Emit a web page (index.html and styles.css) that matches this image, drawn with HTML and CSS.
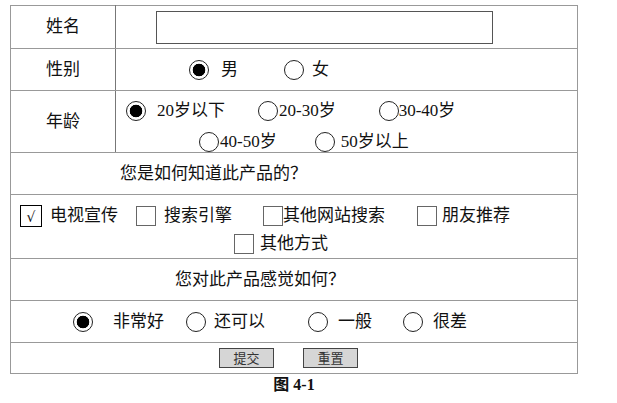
FILE: index.html
```html
<!DOCTYPE html>
<html lang="zh-CN">
<head>
    <meta charset="UTF-8">
    <title>产品调查表</title>
    <link rel="stylesheet" href="styles.css">
</head>
<body>
    <table class="survey">
        <tr class="row-name">
            <th>姓名</th>
            <td><input type="text" class="name-box"></td>
        </tr>
        <tr class="row-sex">
            <th>性别</th>
            <td>
                <div class="line sex-line">
                    <label class="opt gap12"><span class="radio on"></span>男</label>
                    <label class="opt gap8 skip46"><span class="radio"></span>女</label>
                </div>
            </td>
        </tr>
        <tr class="row-age">
            <th>年龄</th>
            <td class="top">
                <div class="line age-line1">
                    <label class="opt gap11"><span class="radio on"></span>20岁以下</label>
                    <label class="opt gap1 skip33"><span class="radio"></span>20-30岁</label>
                    <label class="opt gap0 skip43"><span class="radio"></span>30-40岁</label>
                </div>
                <div class="line age-line2">
                    <label class="opt gap1"><span class="radio"></span>40-50岁</label>
                    <label class="opt gap6 skip38"><span class="radio"></span>50岁以上</label>
                </div>
            </td>
        </tr>
        <tr class="row-question">
            <td colspan="2" class="ask ask-source">您是如何知道此产品的？</td>
        </tr>
        <tr class="row-source">
            <td colspan="2" class="top">
                <div class="line src-line1">
                    <label class="opt gap8"><span class="box on">√</span>电视宣传</label>
                    <label class="opt gap8 skip19"><span class="box"></span>搜索引擎</label>
                    <label class="opt gap0 skip31"><span class="box"></span>其他网站搜索</label>
                    <label class="opt gap5 skip32"><span class="box"></span>朋友推荐</label>
                </div>
                <div class="line src-line2">
                    <label class="opt gap6"><span class="box"></span>其他方式</label>
                </div>
            </td>
        </tr>
        <tr class="row-question dark">
            <td colspan="2" class="ask ask-feel">您对此产品感觉如何？</td>
        </tr>
        <tr class="row-feel dark">
            <td colspan="2">
                <div class="line feel-line">
                    <label class="opt gap20"><span class="radio on"></span>非常好</label>
                    <label class="opt gap8 skip22"><span class="radio"></span>还可以</label>
                    <label class="opt gap10 skip43"><span class="radio"></span>一般</label>
                    <label class="opt gap10 skip31"><span class="radio"></span>很差</label>
                </div>
            </td>
        </tr>
        <tr class="row-buttons dark">
            <td colspan="2">
                <div class="line btn-line">
                    <button type="submit">提交</button>
                    <button type="reset">重置</button>
                </div>
            </td>
        </tr>
    </table>
    <p class="caption">图 <b>4-1</b></p>
</body>
</html>
```

FILE: styles.css
```css
body {
    margin: 0;
    padding: 5px 0 0 10px;
    background-color: #fff;
    font-family: "Liberation Serif", "Noto Sans CJK SC", serif;
    font-size: 17px;
    color: #111;
}
.survey {
    width: 568px;
    border-collapse: collapse;
    border: 1px solid #888;
    line-height: 20px;
}
.survey th,
.survey td {
    border: 1px solid #999;
    padding: 0;
    font-weight: normal;
    vertical-align: middle;
}
.survey th {
    width: 104px;
    text-align: center;
    border-right-color: #777;
}
.survey td.top {
    vertical-align: top;
}
.survey tr.dark td {
    border-top-color: #000;
}
.row-name td, .row-name th { height: 42px; }
.row-sex td, .row-sex th { height: 41px; }
.row-age td, .row-age th { height: 61px; }
.row-question td { height: 41px; }
.row-source td { height: 63px; }
.row-feel td { height: 41px; }
.row-buttons td { height: 30px; }

.name-box {
    display: block;
    box-sizing: border-box;
    width: 337px;
    height: 33px;
    margin-left: 40px;
    border: 1px solid #555;
    background: #fff;
}
.line {
    display: flex;
    align-items: center;
}
.opt {
    display: inline-flex;
    align-items: center;
    white-space: nowrap;
}
.radio {
    box-sizing: border-box;
    width: 20px;
    height: 20px;
    border: 1px solid #222;
    border-radius: 50%;
    background: #fff;
}
.radio.on {
    background: radial-gradient(circle, #000 0 6px, #fff 6.6px);
}
.box {
    box-sizing: border-box;
    width: 20px;
    height: 20px;
    border: 1px solid #666;
}
.box.on {
    width: 22px;
    height: 22px;
    border-color: #000;
    font-family: "DejaVu Sans", sans-serif;
    font-size: 14px;
    line-height: 22px;
    text-align: center;
}
.gap0 .radio, .gap0 .box { margin-right: 0; }
.gap1 .radio { margin-right: 1px; }
.gap5 .box { margin-right: 5px; }
.gap6 .radio, .gap6 .box { margin-right: 6px; }
.gap8 .radio, .gap8 .box { margin-right: 8px; }
.gap10 .radio { margin-right: 10px; }
.gap11 .radio { margin-right: 11px; }
.gap12 .radio { margin-right: 12px; }
.gap20 .radio { margin-right: 20px; }
.skip19 { margin-left: 18px; }
.skip22 { margin-left: 22px; }
.skip31 { margin-left: 31px; }
.skip32 { margin-left: 32px; }
.skip33 { margin-left: 33px; }
.skip38 { margin-left: 38px; }
.skip43 { margin-left: 43px; }
.skip46 { margin-left: 46px; }

.sex-line { padding-left: 73px; }
.age-line1 { padding-left: 10px; height: 28px; margin-top: 6px; }
.age-line2 { padding-left: 83px; height: 21px; margin-top: 6px; }
.survey td.ask-source { padding-left: 109px; }
.survey td.ask-feel { padding-left: 164px; }
.src-line1 { padding-left: 9px; height: 28px; margin-top: 7px; }
.src-line2 { padding-left: 223px; height: 28px; }
.feel-line { padding-left: 62px; }
.btn-line {
    padding-left: 208px;
    gap: 29px;
}
button {
    width: 55px;
    height: 20px;
    padding: 0;
    border: 1px solid #444;
    border-radius: 0;
    background-color: #d6d6d6;
    color: #333;
    font-family: "Noto Sans CJK SC", sans-serif;
    font-size: 13px;
    line-height: 18px;
}
.caption {
    width: 568px;
    margin: 2px 0 0;
    text-align: center;
    font-size: 16px;
    line-height: 18px;
    font-weight: bold;
}
.caption b {
    font-family: "Liberation Serif", serif;
}
```
